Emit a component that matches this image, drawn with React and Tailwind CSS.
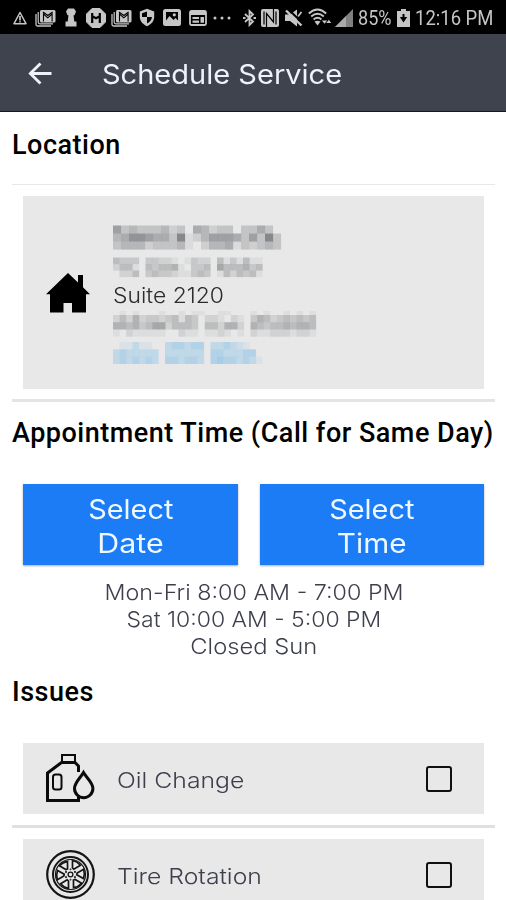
import { useState } from 'react'

// Each character is one block, 0 = blank, 9 = darkest
const MASKED_LINES = [
  { x: 0, y: 7.5, size: 8, height: 8, color: '#55585e', rows: ['634333423054233033530', '457765538124666536383', '344423334102445132343'] },
  { x: 0, y: 39.5, size: 6.5, height: 6.5, color: '#66686c', rows: ['43330332210132204131411', '24410434451033406444534', '02240343321134301424341'] },
  { x: 0, y: 93, size: 6.55, height: 4, color: '#77797c', rows: ['0101000100101100110001010010101'] },
  { x: 0, y: 97, size: 6.55, height: 7.2, color: '#66686c', rows: ['2425233234143022102103542343434', '5545346624443044255205434454554', '1021111100211011210102112221221'] },
  { x: 0, y: 124, size: 6.5, height: 7.3, color: '#4aa8e6', rows: ['01131100344344033432100', '34333330333333044333440', '34343430443443045443431'] },
]

function MaskedText() {
  return (
    <svg width="208" height="158" viewBox="0 0 208 158" className="absolute top-1 left-0 blur-[0.7px]" aria-hidden="true">
      {MASKED_LINES.map((line, i) =>
        line.rows.map((row, r) =>
          [...row].map((level, c) => (
            <rect
              key={`${i}-${r}-${c}`}
              x={line.x + c * line.size}
              y={line.y + r * line.height}
              width={line.size + 0.1}
              height={line.height + 0.1}
              fill={line.color}
              opacity={Number(level) * 0.083}
            />
          )),
        ),
      )}
    </svg>
  )
}

function MailStackIcon({ className }) {
  return (
    <svg width="21" height="18" viewBox="0 0 21 18" fill="none" className={className}>
      <path d="M1 5v10.5q0 1.5 1.5 1.5H16" stroke="currentColor" strokeWidth="1.3" />
      <path d="M3.2 3v10q0 1.8 1.8 1.8h13" stroke="currentColor" strokeWidth="1.2" />
      <rect x="5" y="1" width="15.5" height="12.5" rx="1.5" fill="currentColor" />
      <path d="M8.5 12.5V5l4.300 3.800L17.100 5v7.500M8 3l4.800 3.500L17.600 3" stroke="#000" strokeWidth="1.100" />
    </svg>
  )
}

function StatusBar() {
  return (
    <div className="flex h-[34px] shrink-0 items-center bg-black pl-[13px] pt-px text-[#c6c6c6]">
      <svg width="14" height="14" viewBox="0 0 14 14" fill="none" stroke="currentColor" strokeWidth="1.5">
        <path d="M7 1.5 13 12.7H1Z" strokeLinejoin="round" />
        <path d="M7 5v4.4M7 10.2v1.4" strokeWidth="1.7" />
      </svg>
      <MailStackIcon className="ml-2" />
      <svg width="12" height="19" viewBox="0 0 12 19" fill="currentColor" className="ml-[9px]">
        <path d="M3 .5h6L11 3.500 9.500 7.200H8.500l.8 6.300H11.500V18.500H.5v-5h2.200l.8-6.300h-1L1 3.500Z" />
      </svg>
      <svg width="20" height="20" viewBox="0 0 20 20" className="ml-[9px]">
        <path d="M6 .5h8L19.5 6v8L14 19.5H6L.5 14V6Z" fill="currentColor" stroke="currentColor" strokeLinejoin="round" />
        <path d="M6.200 5v10M13.800 5v10M6.200 8.200l3.800 2 3.800-2" stroke="#000" strokeWidth="2.200" fill="none" />
      </svg>
      <MailStackIcon className="ml-[5px]" />
      <svg width="16" height="19" viewBox="0 0 16 19" className="ml-[7px]">
        <path d="M8 .8 15.2 3.5v5.2c0 4.3-3 7.7-7.2 9.5C3.800 16.4.8 13 .8 8.700V3.500Z" fill="currentColor" />
        <path d="M8 3.500v5.500H3V5.300ZM8 9h5q-.5 4-5 6.500Z" fill="#000" />
      </svg>
      <svg width="18" height="17" viewBox="0 0 18 17" className="ml-2">
        <rect x="1" y="1" width="16" height="15" rx="1.500" fill="currentColor" stroke="currentColor" strokeWidth="2" />
        <path d="M3 3h12v8.500l-2.500-2.500-2 2-4-4L3 11.500Z" fill="#000" />
        <circle cx="11.300" cy="5.800" r="1.600" fill="currentColor" />
      </svg>
      <svg width="18" height="16" viewBox="0 0 18 16" className="ml-2">
        <rect x="1" y="1" width="16" height="14" rx="1.500" fill="none" stroke="currentColor" strokeWidth="1.800" />
        <path d="M1 1.500h16v3.500H1ZM3.500 7h6.500v2H3.500ZM3.500 10.500h6.500v2.300H3.500ZM11.500 7h3.500v5.800h-3.500Z" fill="currentColor" />
      </svg>
      <svg width="18" height="4" viewBox="0 0 18 4" fill="currentColor" className="ml-[6px]">
        <circle cx="2" cy="2" r="1.500" />
        <circle cx="9" cy="2" r="1.500" />
        <circle cx="16" cy="2" r="1.500" />
      </svg>

      <svg width="13" height="18" viewBox="0 0 13 18" fill="none" stroke="currentColor" strokeWidth="1.800" className="ml-[12px]">
        <path d="m2 5 8 7.500L6.500 16V2L10 5.500 2 13" />
        <path d="M0 9h2.500M10.500 9H13" strokeWidth="2.200" />
      </svg>
      <svg width="18" height="18" viewBox="0 0 18 18" className="ml-[5px]">
        <rect width="18" height="18" rx="2" fill="currentColor" />
        <path d="M5.500 18V4.500L12.500 13V0M3 2.500v13M15 2.500v13" stroke="#000" strokeWidth="1.200" fill="none" />
      </svg>
      <svg width="18" height="18" viewBox="0 0 18 18" className="ml-[6px]">
        <path d="M0 5.500h5l7-5v17l-7-5.500H0Z" fill="currentColor" />
        <path d="m3 0 15 14.500" stroke="#000" strokeWidth="2" />
        <path d="m1 1.500 15.500 15" stroke="currentColor" strokeWidth="2.400" />
        <path d="m13 7.500 3.500-4.500" stroke="currentColor" strokeWidth="1.800" />
      </svg>
      <svg width="24" height="19" viewBox="0 0 24 19" fill="none" stroke="currentColor" strokeWidth="1.900" className="ml-[5px]">
        <path d="M.8 5.500q8.700-8 17.400 0M3.200 8.500q6.300-5.500 12.600 0M5.600 11.500q3.900-3.500 7.800 0" />
        <path d="m6.500 13.500 3 4 3-4q-3-1.600-6 0ZM13.800 12.500l2.800 3.300 2.600-3.300ZM18.300 15l2.500-3.300L23.300 15Z" fill="currentColor" stroke="none" />
      </svg>
      <svg width="18" height="18" viewBox="0 0 18 18" className="ml-[3px]">
        <path d="M0 18 18 0v18Z" fill="currentColor" opacity=".65" />
        <path d="M0 18 11 7v11Z" fill="currentColor" opacity=".6" />
      </svg>
      <span className="ml-[5px] w-[34px] origin-left scale-x-[0.86] whitespace-nowrap pt-px font-[Roboto] text-[21px] leading-none">85%</span>
      <svg width="13" height="18" viewBox="0 0 13 18" className="ml-[5px]">
        <path d="M4 0h5v2h4v16H0V2h4Z" fill="currentColor" />
        <path d="M5.500 5h2v3h2.700L6.500 13.500 2.800 8h2.700Z" fill="#000" />
      </svg>
      <span className="ml-[5px] origin-left scale-x-[0.88] whitespace-nowrap pt-px font-[Roboto] text-[21px] leading-none">12:16 PM</span>
    </div>
  )
}

function HouseIcon() {
  return (
    <svg width="44" height="40" viewBox="0 0 44 40" className="shrink-0">
      <path d="M22 0 32 9.500V2h5v12.200L44 21.200h-4V39.500H26V30h-8.500v9.500H4V21.200H0Z" />
    </svg>
  )
}

function OilIcon() {
  return (
    <svg width="49" height="49" viewBox="0 0 49 49" fill="none" stroke="#0b0b0b" className="shrink-0">
      <path d="M16 8V1h13v7" strokeWidth="2" />
      <path d="M32.500 18v-6L29 8.500H15.500L1.500 19v27.500h31V42" strokeWidth="3" />
      <rect x="7" y="20.500" width="8.500" height="15" rx="2.500" strokeWidth="2" />
      <path d="M37.500 18.500C34 24.500 28.500 28.500 28.500 34.500a9.200 9.200 0 0 0 18.400 0c0-6-5.900-10-9.400-16Z" strokeWidth="3" />
    </svg>
  )
}

function TireIcon() {
  return (
    <svg width="49" height="49" viewBox="0 0 49 49" fill="none" stroke="#151515" className="shrink-0">
      <circle cx="24.500" cy="24.500" r="23.300" strokeWidth="2.200" />
      <circle cx="24.500" cy="24.500" r="17.500" strokeWidth="2" />
      <circle cx="24.500" cy="24.500" r="15" strokeWidth="1.200" />
      <circle cx="24.500" cy="24.500" r="2.400" strokeWidth="1.300" />
      {[0, 60, 120, 180, 240, 300].map((angle) => (
        <g key={angle} transform={`rotate(${angle} 24.500 24.500)`}>
          <path d="M26.500 10.500v7.500l1.300 1.200 6.600-3.900a13.500 13.500 0 0 0-7.900-4.800Z" strokeWidth="1.700" />
          <circle cx="24.500" cy="19.300" r=".5" strokeWidth="1" />
        </g>
      ))}
    </svg>
  )
}

function IssueRow({ icon, label }) {
  const [checked, setChecked] = useState(false)

  return (
    <label className="mx-[11px] flex h-[71px] shrink-0 items-center bg-[#e8e8e8] pl-[23px] pr-8">
      {icon}
      <span className="ml-[22px] flex-1 pt-[3px]">
        <span className="inline-block origin-left scale-x-[1.125] font-[Inter] text-[22px] font-light text-[#3d3f4c]">{label}</span>
      </span>
      <input
        type="checkbox"
        checked={checked}
        onChange={(e) => setChecked(e.target.checked)}
        className="size-[26px] appearance-none rounded-[3px] border-2 border-[#101010] checked:bg-[#1c1c1c]"
      />
    </label>
  )
}

function Heading({ children, className }) {
  return (
    <h2 className={`shrink-0 whitespace-nowrap font-[Roboto] text-[27px] font-medium leading-8 tracking-[0.5px] text-black ${className}`}>
      {children}
    </h2>
  )
}

export default function App() {
  return (
    <div className="flex h-[900px] w-[506px] flex-col overflow-hidden bg-white font-[Inter]">
      <StatusBar />
      <header className="flex h-[78px] shrink-0 items-center border-b border-[#15181f] bg-[#3e434e] pl-[28px] pt-0.5 text-[#edf2fb]">
        <svg width="24" height="23" viewBox="0 0 24 23" fill="none" stroke="currentColor" strokeWidth="2.800">
          <path d="M12.500 1.500 2.300 11.500 12.500 21.500M2.300 11.500H23.500" />
        </svg>
        <h1 className="ml-[50px] origin-left scale-x-[1.075] whitespace-nowrap pt-0.5 text-[27px] font-normal leading-8">Schedule Service</h1>
      </header>

      <main className="flex flex-1 flex-col px-3">
        <Heading className="mt-[17px]">Location</Heading>
        <section className="mr-[-1px] mt-[23px] flex h-[218px] shrink-0 flex-col border-b-[3px] border-t border-b-[#e4e4e4] border-t-[#e8e8e8] px-[11px] pt-[11px]">
          <div className="flex h-[193px] items-center bg-[#e8e8e8] pl-[23px]">
            <HouseIcon />
            <div className="relative ml-[23px] h-[158px] w-[208px] pt-[68px]">
              <MaskedText />
              <p className="inline-block origin-left scale-x-[1.09] whitespace-nowrap text-[21px] font-light leading-7 text-[#2c2c2c]">Suite 2120</p>
            </div>
          </div>
        </section>

        <Heading className="mt-[15px]">Appointment Time (Call for Same Day)</Heading>
        <div className="mx-[10px] mt-[35px] flex shrink-0 justify-between pl-px">
          <button className="flex h-[81px] w-[215px] flex-col items-center justify-center bg-[#1c7cf6] pt-1 text-[27px] leading-[34px] text-[#f0f8ff] shadow-[0_1px_2px_#0005]">
            <span className="scale-x-[1.07]">Select</span>
            <span className="scale-x-[1.125]">Date</span>
          </button>
          <button className="flex h-[81px] w-[224px] flex-col items-center justify-center bg-[#1c7cf6] pt-1 text-[27px] leading-[34px] text-[#f0f8ff] shadow-[0_1px_2px_#0005]">
            <span className="scale-x-[1.07]">Select</span>
            <span className="scale-x-[1.1]">Time</span>
          </button>
        </div>
        <div className="mt-[14px] flex shrink-0 flex-col items-center pl-[2px] text-[22px] font-light leading-[27px] text-[#3d3f4c]">
          <p className="scale-x-[1.06]">Mon-Fri 8:00 AM - 7:00 PM</p>
          <p className="scale-x-[1.045]">Sat 10:00 AM - 5:00 PM</p>
          <p className="scale-x-[1.08]">Closed Sun</p>
        </div>

        <Heading className="mt-[16px]">Issues</Heading>
        <div className="mr-[-1px] mt-[35px] flex shrink-0 flex-col">
          <IssueRow icon={<OilIcon />} label="Oil Change" />
          <hr className="my-[11px] border-t-[3px] border-[#e0e0e0]" />
          <IssueRow icon={<TireIcon />} label="Tire Rotation" />
        </div>
      </main>
    </div>
  )
}
